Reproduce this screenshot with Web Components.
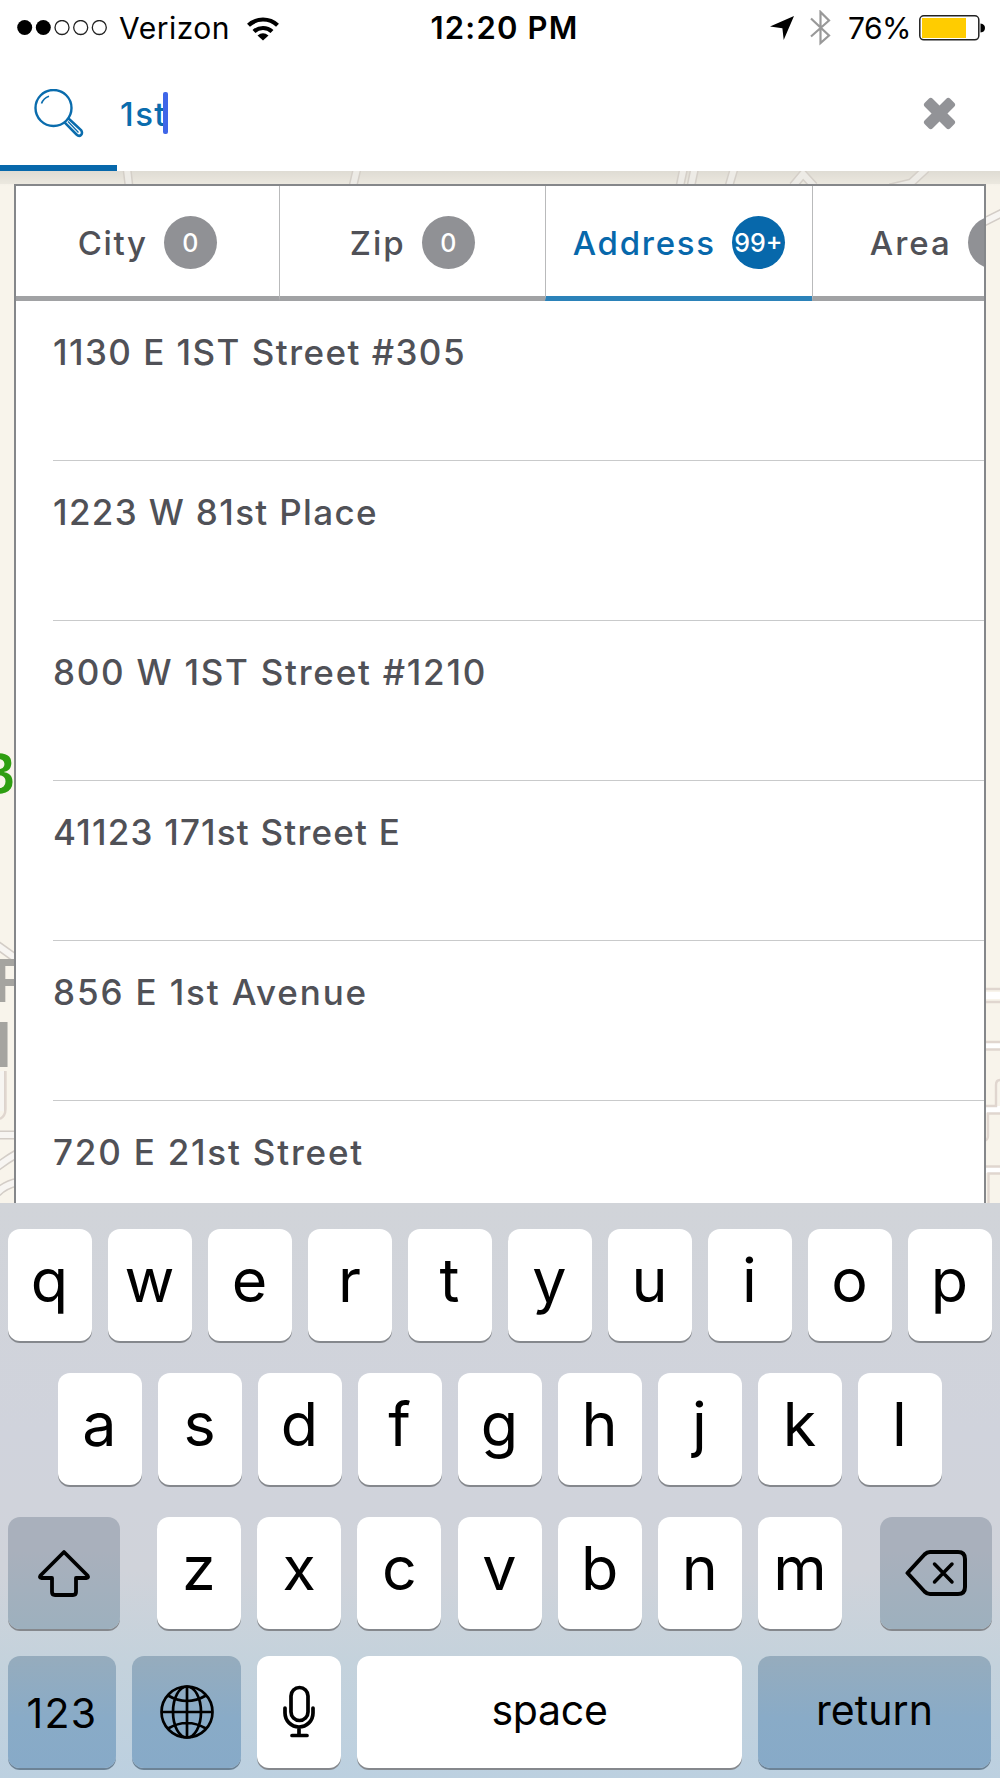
<!DOCTYPE html>
<html lang="en">
<head>
<meta charset="utf-8">
<title>Search</title>
<style>
  body {
    margin: 0;
    background: #fff;
    font-family: Inter, "Liberation Sans", sans-serif;
  }
</style>
</head>
<body>
<search-app></search-app>

<script>
// Single line of text, tracked so that it fills the given width
class FitText extends HTMLElement {
  constructor () {
    super()
    this.shadow = this.attachShadow({ mode: 'open' })
  }

  connectedCallback () {
    this.shadow.innerHTML =
      /* html */`
      <style>
        :host{
            display: block;
            width: max-content;
        }
        span{
            display: block;
            white-space: nowrap;
            width: max-content;
        }
      </style>
      <span><slot></slot></span>`
    const width = Number(this.getAttribute('width'))
    const span = this.shadow.querySelector('span')
    if (width) {
      const gap = (width - span.getBoundingClientRect().width) / this.textContent.length
      span.style.letterSpacing = `${gap}px`
    }
  }
}

class StatusBar extends HTMLElement {
  constructor () {
    super()
    this.shadow = this.attachShadow({ mode: 'open' })
  }

  connectedCallback () {
    this.shadow.innerHTML =
      /* html */`
      <style>
        :host{
            color: #000;
            display: grid;
            font-size: 30px;
            grid-template-columns: 1fr auto 1fr;
            height: 56px;
            line-height: 56px;
        }
        svg{
            display: block;
        }
        .left, .right{
            align-items: center;
            display: flex;
        }
        .left{
            padding-left: 17px;
        }
        .right{
            justify-content: flex-end;
            padding-right: 15px;
        }
        .carrier{
            margin: 0 17px 0 11px;
        }
        .time{
            font-size: 31px;
            font-weight: 600;
            padding-left: 9px;
        }
        .bluetooth{
            margin: 0 17px 0 15px;
        }
        .battery{
            margin-left: 8px;
        }
      </style>
      <div class="left">
        <svg width="91" height="16" viewBox="0 0 91 16">
          <circle cx="7.7" cy="7.5" r="7.5"/><circle cx="26.3" cy="7.5" r="7.5"/>
          <g fill="none" stroke="#222" stroke-width="1.3"><circle cx="45" cy="7.5" r="7"/><circle cx="63.7" cy="7.5" r="7"/><circle cx="82.3" cy="7.5" r="7"/></g>
        </svg>
        <fit-text class="carrier" width="111">Verizon</fit-text>
        <svg width="32" height="25" viewBox="0 0 32 25">
          <g fill="none" stroke="#000" stroke-width="4.2"><path d="M1.5 9.3A21 21 0 0 1 30.5 9.3"/><path d="M7 15.6A13 13 0 0 1 25 15.6"/></g>
          <path d="M16 24.6L10.5 19.4Q16 15 21.5 19.4Z"/>
        </svg>
      </div>
      <fit-text class="time" width="148">12:20 PM</fit-text>
      <div class="right">
        <svg width="25" height="25" viewBox="0 0 25 25"><path d="M24 0L13.7 24L12.4 12.2L0 10.6Z"/></svg>
        <svg class="bluetooth" width="21" height="36" viewBox="0 0 21 36"><path d="M1 8.5L19 25.5L10.5 33V2L19 10.5L1 26.5" fill="none" stroke="#999" stroke-width="2.2"/></svg>
        <fit-text width="63">76%</fit-text>
        <svg class="battery" width="66" height="26" viewBox="0 0 66 26">
          <rect x=".8" y=".8" width="59" height="24" rx="4" fill="#fff" stroke="#222" stroke-width="1.5"/>
          <path d="M3 3H47V23H3Z" fill="#fc0"/>
          <path d="M61.5 8.5Q66 9 66 13T61.5 17.5Z"/>
        </svg>
      </div>`
  }
}

class SearchField extends HTMLElement {
  constructor () {
    super()
    this.shadow = this.attachShadow({ mode: 'open' })
  }

  connectedCallback () {
    this.shadow.innerHTML =
      /* html */`
      <style>
        :host{
            align-items: center;
            background: linear-gradient(#0768ab, #0768ab) left bottom / 117px 6px no-repeat;
            box-sizing: border-box;
            display: flex;
            height: 115px;
            padding: 0 44px 0 34px;
        }
        .value{
            color: #0a6cad;
            font-size: 33px;
            font-weight: 500;
            margin-left: 36px;
        }
        .caret{
            background: #3f66e8;
            border-radius: 2px;
            height: 42px;
            margin: -2px auto 0 -4px;
            width: 5px;
        }
        svg{
            display: block;
        }
      </style>
      <svg width="50" height="50" viewBox="34 88 50 50" fill="none" stroke="#0a6cad" stroke-width="2.4">
        <circle cx="53.5" cy="107" r="18"/>
        <path d="M41.5 102.5Q43.5 97 49 95.2" stroke-width="1.6"/>
        <path d="M64.3 121.2L76.5 133.5Q79 136 81 134T81 129L68 117" stroke-width="2.5"/>
        <path d="M68 120.5L78.5 131.5" stroke-width="1.3"/>
      </svg>
      <fit-text class="value" width="47">${this.getAttribute('value')}</fit-text>
      <div class="caret"></div>
      <svg width="33" height="33" viewBox="-16.5 -16.5 33 33" fill="#929397">
        <rect x="-18" y="-5.6" width="36" height="11.2" rx="2.8" transform="rotate(45)"/>
        <rect x="-18" y="-5.6" width="36" height="11.2" rx="2.8" transform="rotate(-45)"/>
      </svg>`
  }
}

class MapView extends HTMLElement {
  constructor () {
    super()
    this.shadow = this.attachShadow({ mode: 'open' })
  }

  connectedCallback () {
    const roads = `
      <path d="M127 -2L129 15"/><path d="M357 -2L353 15"/>
      <path d="M683.5 -2L680 15"/><path d="M694.5 -2L691 15"/><path d="M734 -2L729 15"/>
      <path d="M793 15L803 3L814 15"/><path d="M926 -2L911 12L890 17"/>
      <path d="M982 52L1002 42"/>
      <path d="M-3 774L18 789"/><path d="M-3 964H18"/>
      <path d="M-3 996Q6 989 18 982"/><path d="M-3 1022Q4 1014 18 1011"/>
      <path d="M1 900V940"/>`
    this.shadow.innerHTML =
      /* html */`
      <style>
        :host{
            background: linear-gradient(#e2dfd8, #f8f4eb 15px);
            display: block;
        }
        svg{
            display: block;
        }
        text{
            font-family: "Liberation Sans", sans-serif;
            font-weight: bold;
        }
        .price{
            font-family: "Open Sans", sans-serif;
            font-weight: 600;
        }
      </style>
      <svg width="1000" height="1032" viewBox="0 0 1000 1032" fill="none">
        <g stroke="#d3cdc7" stroke-width="9">${roads}</g>
        <g stroke="#f7f5f2" stroke-width="6">${roads}</g>
        <g stroke="#fff" stroke-width="7"><path d="M984 824.5H1000M984 874.5H1000M984 938.5H1000M984 998.5H1000"/></g>
        <g stroke="#e0d6cf" stroke-width="2.4">
          <path d="M984 818H1000M984 831H1000M984 871H1000M984 878.5H1000M984 935H996V914Q996 909 1000 909M1000 942.5H988V965Q988 969 984 970M984 995.5H1000M1000 1002.5H988.5V1032"/>
          <path d="M0 868L3 872M5.5 900V938Q5.5 945 0 948"/>
        </g>
        <rect width="1000" height="13" fill="#d8d4cb" opacity=".3"/>
        <text class="price" x="-22" y="623" font-size="57" fill="#2e9e12">B</text>
        <text x="-8" y="831" font-size="63" fill="#a5a4a0">F</text>
        <text x="-6" y="896" font-size="64" fill="#a5a4a0">I</text>
      </svg>`
  }
}

class ResultTab extends HTMLElement {
  constructor () {
    super()
    this.shadow = this.attachShadow({ mode: 'open' })
  }

  connectedCallback () {
    this.shadow.innerHTML =
      /* html */`
      <style>
        :host{
            --badge: #909195;
            align-items: center;
            border-bottom: 5px solid #a1a2a4;
            border-left: 1.5px solid #b9babb;
            box-sizing: border-box;
            color: #505157;
            display: flex;
            flex: none;
            font-size: 33px;
            font-weight: 500;
            gap: 16px;
            height: 115px;
            justify-content: center;
            padding-top: 3px;
            width: 266.5px;
        }
        :host(:first-child){
            border-left: 0;
            width: 262.5px;
        }
        :host([active]){
            --badge: #0768ab;
            border-bottom-color: #2b82b9;
            color: #0768ab;
        }
        .badge{
            align-items: center;
            background: var(--badge);
            border-radius: 50%;
            color: #fff;
            display: flex;
            font-size: 25px;
            height: 53px;
            justify-content: center;
            width: 53px;
        }
      </style>
      <fit-text width="${this.getAttribute('label-width')}">${this.getAttribute('label')}</fit-text>
      <div class="badge"><slot></slot></div>`
  }
}

class ResultRow extends HTMLElement {
  constructor () {
    super()
    this.shadow = this.attachShadow({ mode: 'open' })
  }

  connectedCallback () {
    this.shadow.innerHTML =
      /* html */`
      <style>
        :host{
            border-bottom: 1.5px solid #c9cacb;
            box-sizing: border-box;
            color: #505157;
            display: block;
            flex: none;
            font-size: 35px;
            font-weight: 500;
            height: 160px;
            line-height: 102px;
            margin-left: 37px;
        }
      </style>
      <fit-text width="${this.getAttribute('text-width')}">${this.getAttribute('address')}</fit-text>`
  }
}

class ResultPanel extends HTMLElement {
  constructor () {
    super()
    this.shadow = this.attachShadow({ mode: 'open' })
  }

  connectedCallback () {
    this.shadow.innerHTML =
      /* html */`
      <style>
        :host{
            background: #fff;
            border: 2px solid #85878a;
            border-bottom: 0;
            box-sizing: border-box;
            display: flex;
            flex-direction: column;
            margin: 13px 14.5px 0 14px;
            overflow: hidden;
        }
        .tabs{
            display: flex;
            flex: none;
            overflow: hidden;
        }
      </style>
      <div class="tabs">
        <result-tab label="City" label-width="70">0</result-tab>
        <result-tab label="Zip" label-width="56">0</result-tab>
        <result-tab label="Address" label-width="143" active>99+</result-tab>
        <result-tab label="Area" label-width="82">0</result-tab>
      </div>
      <result-row address="1130 E 1ST Street #305" text-width="413"></result-row>
      <result-row address="1223 W 81st Place" text-width="325"></result-row>
      <result-row address="800 W 1ST Street #1210" text-width="434"></result-row>
      <result-row address="41123 171st Street E" text-width="348"></result-row>
      <result-row address="856 E 1st Avenue" text-width="315"></result-row>
      <result-row address="720 E 21st Street" text-width="311"></result-row>`
  }
}

class KeyCap extends HTMLElement {
  constructor () {
    super()
    this.shadow = this.attachShadow({ mode: 'open' })
  }

  connectedCallback () {
    this.shadow.innerHTML =
      /* html */`
      <style>
        :host{
            align-items: center;
            background: #fff;
            border-radius: 12px;
            box-shadow: 0 2px 0 #85888d;
            box-sizing: border-box;
            color: #000;
            display: flex;
            flex: none;
            font-size: 61px;
            font-weight: 400;
            height: 112px;
            justify-content: center;
            line-height: 1;
            padding-bottom: 10px;
            width: 84px;
        }
        :host([wide]){
            font-size: 41px;
            padding-bottom: 3px;
        }
        :host([dark]){
            background: linear-gradient(#a9b0bc 30%, #9db0be);
        }
        :host([blue]){
            background: linear-gradient(#96acbd, #89abc7 55%, #87aac8);
            box-shadow: 0 2px 0 #6d8396;
        }
        ::slotted(svg){
            display: block;
        }
      </style>
      <slot></slot>`
  }
}

class KeyBoard extends HTMLElement {
  constructor () {
    super()
    this.shadow = this.attachShadow({ mode: 'open' })
  }

  keys (letters) {
    return [...letters].map(letter => `<key-cap>${letter}</key-cap>`).join('')
  }

  connectedCallback () {
    this.shadow.innerHTML =
      /* html */`
      <style>
        :host{
            background: linear-gradient(#d1d4d9, #d0d3dc 40%, #d0d3da 64%, #c4d2dc 80%, #bcd0e0);
            box-sizing: border-box;
            display: flex;
            flex-direction: column;
            height: 575px;
            padding: 26px 8.5px 0 7.5px;
        }
        .row{
            display: flex;
            gap: 16px;
            justify-content: center;
            margin-bottom: 32px;
        }
        .row.third{
            justify-content: space-between;
            margin-bottom: 26.5px;
        }
        .row.last{
            margin: 0;
        }
        .letters{
            display: flex;
            gap: 16.2px;
        }
      </style>
      <div class="row">${this.keys('qwertyuiop')}</div>
      <div class="row">${this.keys('asdfghjkl')}</div>
      <div class="row third">
        <key-cap wide dark style="width: 112px; padding: 0">
          <svg width="54" height="48" viewBox="0 0 54 48"><path d="M27 3L3.5 26.5Q2 29 4.5 29H15V43Q15 46 18 46H36Q39 46 39 43V29H49.5Q52 29 50.5 26.5Z" fill="none" stroke="#000" stroke-width="3.8" stroke-linejoin="round"/></svg>
        </key-cap>
        <div class="letters">${this.keys('zxcvbnm')}</div>
        <key-cap wide dark style="width: 112px; padding: 0">
          <svg width="62" height="48" viewBox="0 0 62 48" fill="none" stroke="#000" stroke-width="4" stroke-linejoin="round" stroke-linecap="round"><path d="M2.5 24L19.5 5.5Q22 3 25 3H53Q60 3 60 10V38Q60 45 53 45H25Q22 45 19.5 42.5Z"/><path d="M29.500 15L47 33M47 15L29.500 33" stroke-width="3.5"/></svg>
        </key-cap>
      </div>
      <div class="row last">
        <key-cap wide blue style="width: 108px; padding: 3px 0 0"><fit-text width="71">123</fit-text></key-cap>
        <key-cap wide blue style="width: 109px; padding: 0">
          <svg width="54" height="54" viewBox="0 0 54 54" fill="none" stroke="#000" stroke-width="2.7"><circle cx="27" cy="27" r="25.5"/><ellipse cx="27" cy="27" rx="14" ry="25.5"/><path d="M27 1.5V52.5M1.5 27H52.5M8 10.5Q27 21.5 46 10.5M8 43.5Q27 32.5 46 43.5"/></svg>
        </key-cap>
        <key-cap wide style="padding: 0">
          <svg width="32" height="53" viewBox="0 0 32 53" fill="none" stroke="#000" stroke-width="3.7" stroke-linecap="round"><rect x="8" y="2.5" width="17" height="33" rx="8.5"/><path d="M2 23V28A14 14 0 0 0 30 28V23M16 42V50M9 50.5H24"/></svg>
        </key-cap>
        <key-cap wide style="width: 385px"><fit-text width="116">space</fit-text></key-cap>
        <key-cap wide blue style="width: 233px"><fit-text width="117">return</fit-text></key-cap>
      </div>`
  }
}

class SearchApp extends HTMLElement {
  constructor () {
    super()
    this.shadow = this.attachShadow({ mode: 'open' })
  }

  connectedCallback () {
    this.shadow.innerHTML =
      /* html */`
      <style>
        :host{
            display: flex;
            flex-direction: column;
            height: 1778px;
            overflow: hidden;
            width: 1000px;
        }
        /* the map and the results share one cell */
        .results{
            display: grid;
            grid-template: 1032px / 1000px;
        }
        map-view, result-panel{
            grid-area: 1 / 1;
            min-height: 0;
            min-width: 0;
        }
        result-panel{
            z-index: 1;
        }
      </style>
      <status-bar></status-bar>
      <search-field value="1st"></search-field>
      <div class="results">
        <map-view></map-view>
        <result-panel></result-panel>
      </div>
      <key-board></key-board>`
  }
}

customElements.define('fit-text', FitText)
customElements.define('status-bar', StatusBar)
customElements.define('search-field', SearchField)
customElements.define('map-view', MapView)
customElements.define('result-tab', ResultTab)
customElements.define('result-row', ResultRow)
customElements.define('result-panel', ResultPanel)
customElements.define('key-cap', KeyCap)
customElements.define('key-board', KeyBoard)
customElements.define('search-app', SearchApp)
</script>
</body>
</html>
